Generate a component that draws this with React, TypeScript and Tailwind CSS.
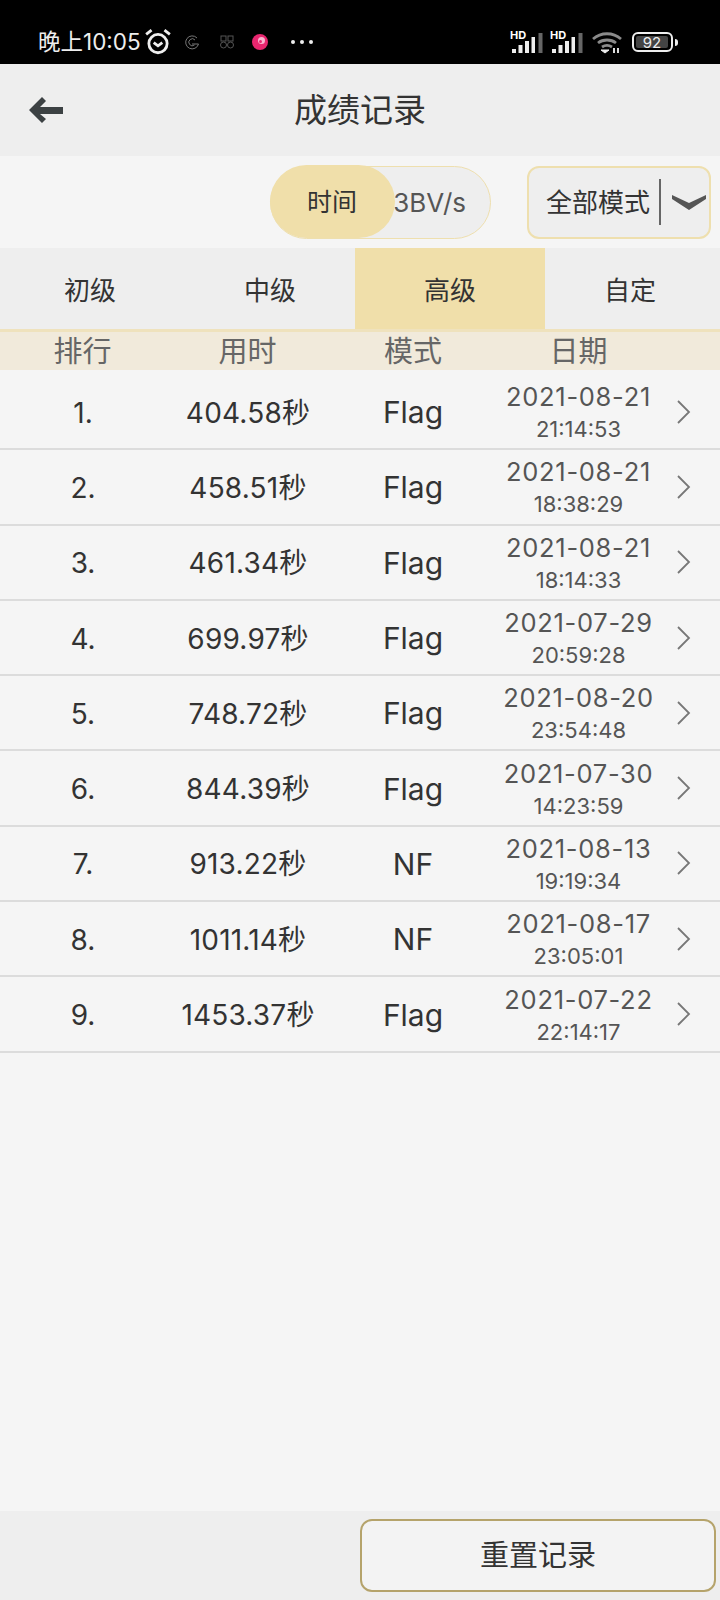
import React from "react";

const rows = [
  ["1.", "404.58秒", "Flag", "2021-08-21", "21:14:53"],
  ["2.", "458.51秒", "Flag", "2021-08-21", "18:38:29"],
  ["3.", "461.34秒", "Flag", "2021-08-21", "18:14:33"],
  ["4.", "699.97秒", "Flag", "2021-07-29", "20:59:28"],
  ["5.", "748.72秒", "Flag", "2021-08-20", "23:54:48"],
  ["6.", "844.39秒", "Flag", "2021-07-30", "14:23:59"],
  ["7.", "913.22秒", "NF", "2021-08-13", "19:19:34"],
  ["8.", "1011.14秒", "NF", "2021-08-17", "23:05:01"],
  ["9.", "1453.37秒", "Flag", "2021-07-22", "22:14:17"],
];

function Signal() {
  return (
    <div className="relative w-[33px] h-[22px]">
      <span className="absolute left-0 top-0 text-[11px] leading-[9px] font-bold text-white">HD</span>
      <svg width="33" height="22" viewBox="0 0 33 22" className="absolute left-0 top-0">
        <rect x="2" y="18" width="4" height="4" fill="#eee" />
        <rect x="8.5" y="14" width="4" height="8" fill="#eee" />
        <rect x="15" y="10" width="4" height="12" fill="#eee" />
        <rect x="21.5" y="6" width="3.5" height="16" fill="#eee" />
        <rect x="28.5" y="2" width="4" height="20" fill="#666" />
      </svg>
    </div>
  );
}

export default function App() {
  return (
    <div className="w-[720px] h-[1600px] flex flex-col bg-[#f5f5f5] text-[#333] overflow-hidden font-['Inter','Noto_Sans_CJK_SC',sans-serif]">
      <div className="h-16 bg-black shrink-0 flex items-center pt-[20px] pl-[38px] pr-[42px] text-[#eee]">
        <span className="text-[22.5px] leading-none">晚上10:05</span>
        <svg width="28" height="28" viewBox="0 0 26 26" className="ml-[3px]" fill="none" stroke="#eee" strokeWidth="2.6">
          <circle cx="13" cy="14.5" r="8.5" />
          <path d="M9 13.5l4 3 4-3" />
          <path d="M2 6l5-4M24 6l-5-4" />
        </svg>
        <svg width="16" height="16" viewBox="0 0 16 16" className="ml-[12px]" fill="none" stroke="#777" strokeWidth="1">
          <path d="M13 4a6.5 6.5 0 1 0 1.5 6H8" />
          <path d="M11 6a3.5 3.5 0 1 0-.5 5" />
        </svg>
        <svg width="16" height="16" viewBox="0 0 16 16" className="ml-[19px]" fill="none" stroke="#555" strokeWidth="1">
          <rect x="2" y="2" width="5" height="5" />
          <rect x="9" y="2" width="5" height="5" />
          <circle cx="4.5" cy="11" r="3" />
          <circle cx="11.5" cy="11" r="3" />
        </svg>
        <svg width="16" height="16" viewBox="0 0 16 16" className="ml-[17px]">
          <circle cx="8" cy="8" r="8" fill="#e8266f" />
          <circle cx="9.5" cy="6.5" r="3.5" fill="#f7b6cf" />
          <circle cx="8.5" cy="7.5" r="1.5" fill="#e8266f" />
        </svg>
        <div className="ml-[23px] flex gap-[5px]">
          <span className="w-1 h-1 rounded-full bg-[#eee]" />
          <span className="w-1 h-1 rounded-full bg-[#eee]" />
          <span className="w-1 h-1 rounded-full bg-[#eee]" />
        </div>
        <div className="ml-auto flex items-center gap-[7px]">
          <Signal />
          <Signal />
          <svg width="32" height="24" viewBox="0 0 32 24" className="ml-[1px]" fill="none" stroke="#8a8a8a" strokeWidth="2.8">
            <path d="M2 9c8-7 20-7 28 0" />
            <path d="M7 13c5-4 13-4 18 0" />
            <path d="M11 17c3-2 7-2 10 0" />
            <path d="M10 20l4 3 4-3z" fill="#eee" stroke="#eee" strokeWidth="1" />
            <path d="M23 18v5M27 18v5" stroke="#ddd" strokeWidth="2" />
          </svg>
          <div className="ml-[2px] flex items-center">
            <div className="w-[41px] h-5 border-2 border-[#eee] rounded-[6px] p-[2px] flex">
              <div className="w-[32px] h-full bg-[#444] rounded-[2px] flex items-center justify-center text-[15px] leading-none text-[#eee]">92</div>
            </div>
            <div className="ml-[2px] w-[3px] h-[7px] bg-[#eee] rounded-r-sm" />
          </div>
        </div>
      </div>

      <div className="h-[92px] shrink-0 bg-[#eeeeee] relative flex items-center justify-center">
        <svg width="34" height="26" viewBox="0 0 34 26" className="absolute left-[29px] top-[33px]" fill="#3c4143">
          <path d="M13 0l4 4-6 6h23v7H11l6 5-4 4L0 13z" />
        </svg>
        <span className="text-[33px] leading-none">成绩记录</span>
      </div>

      <div className="h-[92px] shrink-0 flex items-center justify-end pr-[9px] gap-[36px]">
        <div className="relative w-[221px] h-[73px] rounded-full bg-[#eeeeee] border-[1.5px] border-[#eedfae] flex items-center justify-end pr-[24px] text-[26px] text-[#555]">
          3BV/s
          <div className="absolute left-[-1.5px] top-[-1.5px] w-[125px] h-[73px] rounded-full bg-[#f0dfaa] flex items-center justify-center pt-[2px] text-[25px] text-[#333]">时间</div>
        </div>
        <div className="w-[184px] h-[73px] rounded-[12px] bg-[#eeeeee] border-2 border-[#eedfae] flex items-center pl-[17px] text-[26px]">
          <span>全部模式</span>
          <span className="ml-[9px] w-[2px] h-[46px] bg-[#666]" />
          <svg width="36" height="18" viewBox="0 0 36 18" className="ml-[10px]" fill="#555">
            <path d="M1 2l17 8 17-8v4L18 17 1 6z" />
          </svg>
        </div>
      </div>

      <div className="h-[84px] shrink-0 bg-[#eeeeee] grid grid-cols-4 border-b-[3px] border-[#efe2bd] text-[26px]">
        <div className="flex items-center justify-center pt-[4px]">初级</div>
        <div className="flex items-center justify-center pt-[4px]">中级</div>
        <div className="-mx-[5px] bg-[#f0dfaa] flex items-center justify-center pt-[4px]">高级</div>
        <div className="flex items-center justify-center pt-[4px]">自定</div>
      </div>

      <div className="h-[38px] shrink-0 bg-[#f1eadb] flex items-center text-[29px] leading-none text-[#666]">
        <div className="w-[165px] text-center">排行</div>
        <div className="w-[165px] text-center">用时</div>
        <div className="w-[166px] text-center">模式</div>
        <div className="w-[165px] text-center">日期</div>
      </div>

      <div className="flex-1 pt-[5px]">
        {rows.map((r) => (
          <div key={r[0]} className="h-[75.3px] border-b-2 border-[#dcdcdc] flex items-center">
            <div className="w-[166px] pt-[2px] text-center text-[28px]">{r[0]}</div>
            <div className="w-[164px] pt-[2px] text-center text-[28px] tracking-[0.2px]">{r[1]}</div>
            <div className="w-[166px] pt-[2px] text-center text-[30px]">{r[2]}</div>
            <div className="w-[165px] pt-[3px] text-center text-[#555]">
              <div className="text-[25.5px] leading-[32px] tracking-[0.7px]">{r[3]}</div>
              <div className="text-[22px] leading-[32px]">{r[4]}</div>
            </div>
            <svg width="16" height="26" viewBox="0 0 16 26" className="ml-[15px]" fill="none" stroke="#777" strokeWidth="1.8">
              <path d="M2 2l11 11L2 24" />
            </svg>
          </div>
        ))}
      </div>

      <div className="h-[89px] shrink-0 bg-[#eeeeee] flex items-center justify-end pr-[4px]">
        <button className="w-[356px] h-[73px] rounded-[12px] border-2 border-[#b5a36b] bg-[#f3f3f3] text-[29px] text-[#333]">重置记录</button>
      </div>
    </div>
  );
}
